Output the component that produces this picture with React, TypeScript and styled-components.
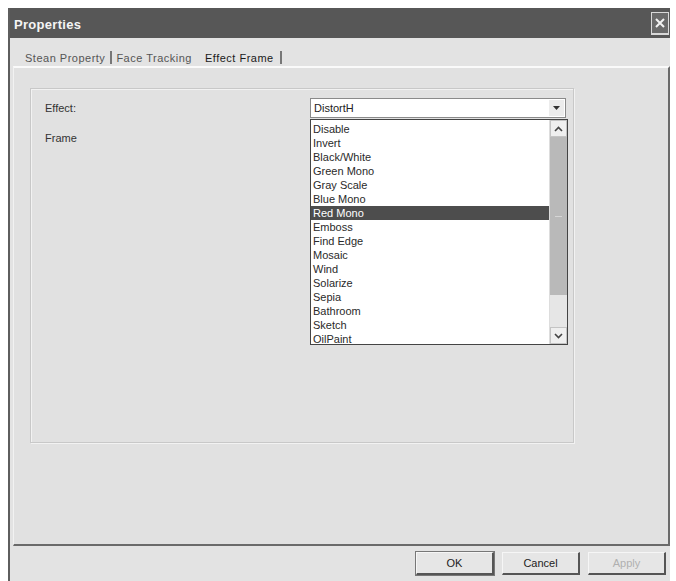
import styled, { createGlobalStyle } from 'styled-components'

const GlobalStyle = createGlobalStyle`
  html, body {
    margin: 0;
    background: #ffffff;
    font-family: "Liberation Sans", Arial, sans-serif;
    font-size: 11px;
    color: #222;
  }
`

const Page = styled.div`
  padding: 8px 0 0 8px;
  height: 573px;
  overflow: hidden;
`

const Window = styled.div`
  width: 660px;
  height: 600px;
  border-left: 2px solid #5e5e5e;
  background: #e3e3e3;
  display: flex;
  flex-direction: column;
`

const TitleBar = styled.div`
  height: 30px;
  background: #575757;
  display: flex;
  align-items: center;
  justify-content: space-between;
  padding: 0 1px 0 4px;
`

const Title = styled.span`
  color: #f4f4f4;
  font-weight: 700;
  font-size: 13px;
  letter-spacing: 0.3px;
  padding-top: 2px;
`

const CloseButton = styled.div`
  width: 16px;
  height: 20px;
  border: 1px solid #d8d8d8;
  border-bottom-width: 2px;
  background: #6a6a6a;
  display: flex;
  align-items: center;
  justify-content: center;
`

const Body = styled.div`
  padding: 2px 0 0 3px;
  display: flex;
  flex-direction: column;
`

const TabStrip = styled.div`
  height: 26px;
  display: flex;
  align-items: flex-end;
  padding-left: 8px;
`

const Tab = styled.div<{ $active?: boolean; $divider?: boolean }>`
  height: 13px;
  padding: 0 5px 0 4px;
  margin-bottom: 2px;
  display: flex;
  align-items: center;
  letter-spacing: 0.5px;
  color: ${p => (p.$active ? '#1a1a1a' : '#555')};
  border-right: ${p => (p.$divider ? '2px solid #777' : '2px solid transparent')};
  ${p => p.$active && 'margin-left: 4px; padding: 0 6px 0 2px;'}
`

const TabPanel = styled.div`
  height: 480px;
  border-top: 2px solid #fafafa;
  border-left: 1px solid #f2f2f2;
  border-right: 2px solid #6a6a6a;
  border-bottom: 2px solid #6a6a6a;
  background: #e1e1e1;
  padding: 20px 0 0 16px;
  box-sizing: border-box;
`

const GroupBox = styled.div`
  width: 544px;
  height: 355px;
  box-sizing: border-box;
  border: 1px solid #c8c8c8;
  box-shadow: inset 1px 1px 0 #f2f2f2, 1px 1px 0 #f2f2f2;
  padding: 9px 0 0 14px;
  display: flex;
  flex-direction: column;
  gap: 10px;
`

const FieldRow = styled.div`
  display: grid;
  grid-template-columns: 265px 256px;
  align-items: center;
  height: 20px;
`

const Label = styled.span`
  color: #333;
`

const ComboWrap = styled.div`
  position: relative;
`

const Combo = styled.div`
  height: 20px;
  box-sizing: border-box;
  border: 1px solid #8a8a8a;
  background: #fff;
  display: flex;
  align-items: center;
  justify-content: space-between;
  padding: 0 1px 0 3px;
`

const ComboArrow = styled.div`
  width: 15px;
  height: 16px;
  background: #ececec;
  display: flex;
  align-items: center;
  justify-content: center;
`

const ListBox = styled.div`
  position: absolute;
  top: 21px;
  left: 0;
  width: 258px;
  height: 226px;
  box-sizing: border-box;
  border: 1px solid #444;
  background: #fff;
  display: flex;
  z-index: 2;
`

const Items = styled.div`
  flex: 1;
  padding-top: 2px;
`

const Item = styled.div<{ $selected?: boolean }>`
  height: 14px;
  line-height: 14px;
  padding-left: 2px;
  color: ${p => (p.$selected ? '#fff' : '#2a2a2a')};
  background: ${p => (p.$selected ? '#4d4d4d' : 'transparent')};
`

const ScrollBar = styled.div`
  width: 17px;
  display: flex;
  flex-direction: column;
  background: #e6e6e6;
  border-left: 1px solid #ddd;
`

const ScrollButton = styled.div`
  height: 15px;
  background: #efefef;
  border: 1px solid #c4c4c4;
  display: flex;
  align-items: center;
  justify-content: center;
`

const Thumb = styled.div`
  height: 158px;
  background: #b9b9b9;
  display: flex;
  align-items: center;
  justify-content: center;
`

const Grip = styled.div`
  width: 7px;
  height: 1px;
  background: #d6d6d6;
`

const Track = styled.div`
  flex: 1;
`

const ButtonRow = styled.div`
  display: flex;
  gap: 8px;
  padding: 6px 0 0 403px;
`

const Button = styled.div<{ $disabled?: boolean; $default?: boolean }>`
  width: 78px;
  height: 23px;
  box-sizing: border-box;
  border: 1px solid #f6f6f6;
  border-right: 2px solid #555;
  border-bottom: 2px solid #555;
  ${p => p.$default && 'outline: 1px solid #777;'}
  display: flex;
  align-items: center;
  justify-content: center;
  color: ${p => (p.$disabled ? '#b0b0b0' : '#222')};
  background: #e6e6e6;
`

const effects = [
  'Disable', 'Invert', 'Black/White', 'Green Mono', 'Gray Scale', 'Blue Mono',
  'Red Mono', 'Emboss', 'Find Edge', 'Mosaic', 'Wind', 'Solarize', 'Sepia',
  'Bathroom', 'Sketch', 'OilPaint',
]

function Chevron({ up }: { up?: boolean }) {
  return (
    <svg width="9" height="6" viewBox="0 0 9 6">
      <path
        d={up ? 'M1 5 L4.5 1.5 L8 5' : 'M1 1 L4.5 4.5 L8 1'}
        fill="none"
        stroke="#444"
        strokeWidth="1.6"
      />
    </svg>
  )
}

export default function App() {
  return (
    <Page>
      <GlobalStyle />
      <Window>
        <TitleBar>
          <Title>Properties</Title>
          <CloseButton>
            <svg width="12" height="12" viewBox="0 0 12 12">
              <path d="M2 2 L10 10 M10 2 L2 10" stroke="#f2f2f2" strokeWidth="2" />
            </svg>
          </CloseButton>
        </TitleBar>
        <Body>
          <TabStrip>
            <Tab $divider>Stean Property</Tab>
            <Tab>Face Tracking</Tab>
            <Tab $active $divider>Effect Frame</Tab>
          </TabStrip>
          <TabPanel>
            <GroupBox>
              <FieldRow>
                <Label>Effect:</Label>
                <ComboWrap>
                  <Combo>
                    <span>DistortH</span>
                    <ComboArrow>
                      <svg width="7" height="4" viewBox="0 0 7 4">
                        <path d="M0 0 H7 L3.5 4 Z" fill="#333" />
                      </svg>
                    </ComboArrow>
                  </Combo>
                  <ListBox>
                    <Items>
                      {effects.map(name => (
                        <Item key={name} $selected={name === 'Red Mono'}>
                          {name}
                        </Item>
                      ))}
                    </Items>
                    <ScrollBar>
                      <ScrollButton>
                        <Chevron up />
                      </ScrollButton>
                      <Thumb>
                        <Grip />
                      </Thumb>
                      <Track />
                      <ScrollButton>
                        <Chevron />
                      </ScrollButton>
                    </ScrollBar>
                  </ListBox>
                </ComboWrap>
              </FieldRow>
              <FieldRow>
                <Label>Frame</Label>
              </FieldRow>
            </GroupBox>
          </TabPanel>
          <ButtonRow>
            <Button $default>OK</Button>
            <Button>Cancel</Button>
            <Button $disabled>Apply</Button>
          </ButtonRow>
        </Body>
      </Window>
    </Page>
  )
}
